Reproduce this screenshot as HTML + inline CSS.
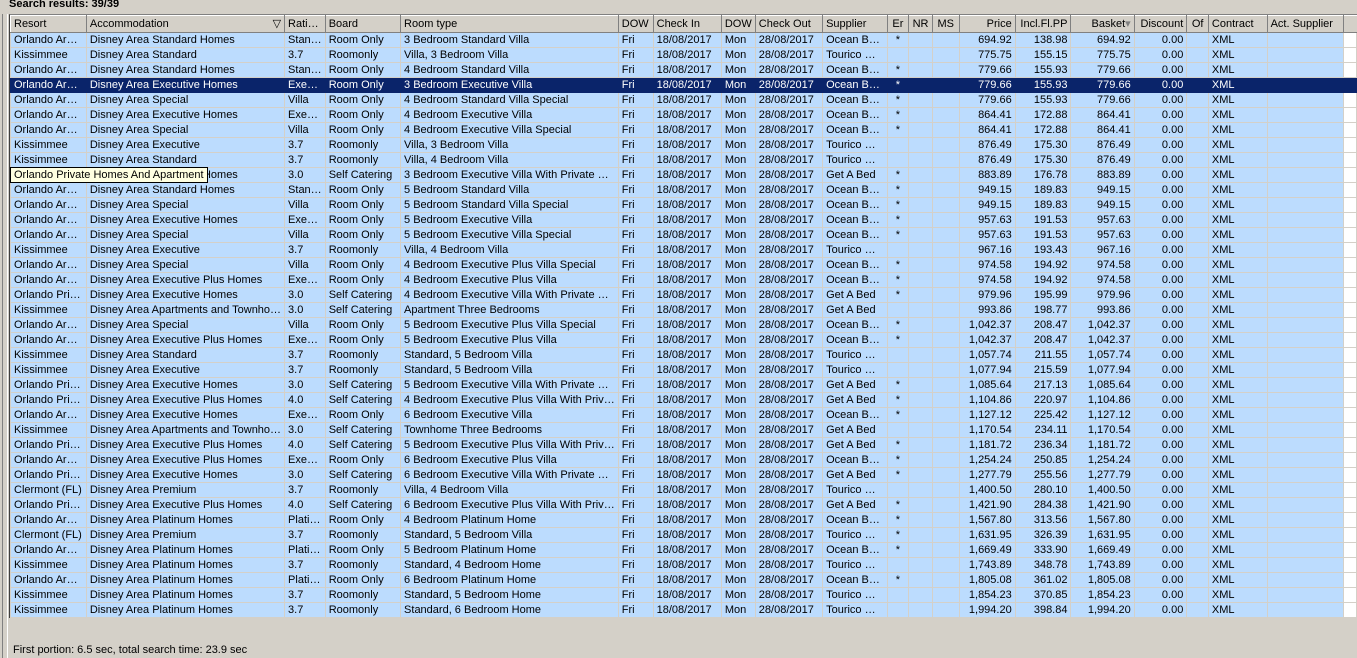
<!DOCTYPE html>
<html><head><meta charset="utf-8"><style>
*{margin:0;padding:0;box-sizing:border-box}
body{width:1357px;height:658px;background:#d4d0c8;font-family:"Liberation Sans",Tahoma,sans-serif;font-size:11px;color:#000;position:relative;overflow:hidden}
#title{position:absolute;left:9px;top:-2px;font-weight:bold;font-size:11px}
#frame{position:absolute;left:9px;top:14px;width:1348px;height:604px;background:#fff;border-left:1px solid #404040;border-top:1px solid #808080}
#lb1{position:absolute;left:2px;top:14px;width:1px;height:644px;background:#808080}
#lb2{position:absolute;left:7px;top:14px;width:1px;height:644px;background:#fff}
table{position:absolute;left:10px;top:15px;border-collapse:collapse;table-layout:fixed}
td,th{height:15px;padding:0 3px;white-space:nowrap;overflow:hidden;border:1px solid #d4d0c8;line-height:13px}
th{font-weight:normal;text-align:left;background:#d4d0c8;height:17px;border:1px solid #808080;border-left-color:#fff;border-top-color:#fff}
tbody tr{background:#bcdcfe}
tbody td.f{background:#fff}
tr.sel{background:#0a246a;color:#fff}
tr.sel td{border-color:#0a246a}
.r{text-align:right}.c{text-align:center}
#tip{position:absolute;left:10px;top:167px;height:16px;padding:0 3px;background:#ffffe1;border:1px solid #000;line-height:14px;white-space:nowrap}
#status{position:absolute;left:13px;top:644px}
</style></head><body>
<div id="title">Search results: 39/39</div>
<div id="lb1"></div><div id="lb2"></div>
<div id="frame"></div>
<table>
<colgroup><col style="width:76px"><col style="width:198px"><col style="width:40px"><col style="width:76px"><col style="width:209px"><col style="width:35px"><col style="width:69px"><col style="width:34px"><col style="width:68px"><col style="width:65px"><col style="width:22px"><col style="width:24px"><col style="width:27px"><col style="width:57px"><col style="width:56px"><col style="width:65px"><col style="width:53px"><col style="width:22px"><col style="width:60px"><col style="width:77px"><col style="width:14px"></colgroup>
<thead><tr><th>Resort</th><th>Accommodation<span style="float:right">&#9661;</span></th><th>Rati…</th><th>Board</th><th>Room type</th><th>DOW</th><th>Check In</th><th>DOW</th><th>Check Out</th><th>Supplier</th><th class="c">Er</th><th class="c">NR</th><th class="c">MS</th><th class="r">Price</th><th class="r">Incl.Fl.PP</th><th class="r">Basket<span style="color:#808080">&#9662;</span></th><th class="r">Discount</th><th class="c">Of</th><th>Contract</th><th>Act. Supplier</th><th style="border-right:none"></th></tr></thead>
<tbody>
<tr><td>Orlando Ar…</td><td>Disney Area Standard Homes</td><td>Stan…</td><td>Room Only</td><td>3 Bedroom Standard Villa</td><td>Fri</td><td>18/08/2017</td><td>Mon</td><td>28/08/2017</td><td>Ocean B…</td><td class="c">*</td><td></td><td></td><td class="r">694.92</td><td class="r">138.98</td><td class="r">694.92</td><td class="r">0.00</td><td></td><td>XML</td><td></td><td class="f"></td></tr>
<tr><td>Kissimmee</td><td>Disney Area Standard</td><td>3.7</td><td>Roomonly</td><td>Villa, 3 Bedroom Villa</td><td>Fri</td><td>18/08/2017</td><td>Mon</td><td>28/08/2017</td><td>Tourico …</td><td class="c"></td><td></td><td></td><td class="r">775.75</td><td class="r">155.15</td><td class="r">775.75</td><td class="r">0.00</td><td></td><td>XML</td><td></td><td class="f"></td></tr>
<tr><td>Orlando Ar…</td><td>Disney Area Standard Homes</td><td>Stan…</td><td>Room Only</td><td>4 Bedroom Standard Villa</td><td>Fri</td><td>18/08/2017</td><td>Mon</td><td>28/08/2017</td><td>Ocean B…</td><td class="c">*</td><td></td><td></td><td class="r">779.66</td><td class="r">155.93</td><td class="r">779.66</td><td class="r">0.00</td><td></td><td>XML</td><td></td><td class="f"></td></tr>
<tr class="sel"><td>Orlando Ar…</td><td>Disney Area Executive Homes</td><td>Exe…</td><td>Room Only</td><td>3 Bedroom Executive Villa</td><td>Fri</td><td>18/08/2017</td><td>Mon</td><td>28/08/2017</td><td>Ocean B…</td><td class="c">*</td><td></td><td></td><td class="r">779.66</td><td class="r">155.93</td><td class="r">779.66</td><td class="r">0.00</td><td></td><td>XML</td><td></td><td></td></tr>
<tr><td>Orlando Ar…</td><td>Disney Area Special</td><td>Villa</td><td>Room Only</td><td>4 Bedroom Standard Villa Special</td><td>Fri</td><td>18/08/2017</td><td>Mon</td><td>28/08/2017</td><td>Ocean B…</td><td class="c">*</td><td></td><td></td><td class="r">779.66</td><td class="r">155.93</td><td class="r">779.66</td><td class="r">0.00</td><td></td><td>XML</td><td></td><td class="f"></td></tr>
<tr><td>Orlando Ar…</td><td>Disney Area Executive Homes</td><td>Exe…</td><td>Room Only</td><td>4 Bedroom Executive Villa</td><td>Fri</td><td>18/08/2017</td><td>Mon</td><td>28/08/2017</td><td>Ocean B…</td><td class="c">*</td><td></td><td></td><td class="r">864.41</td><td class="r">172.88</td><td class="r">864.41</td><td class="r">0.00</td><td></td><td>XML</td><td></td><td class="f"></td></tr>
<tr><td>Orlando Ar…</td><td>Disney Area Special</td><td>Villa</td><td>Room Only</td><td>4 Bedroom Executive Villa Special</td><td>Fri</td><td>18/08/2017</td><td>Mon</td><td>28/08/2017</td><td>Ocean B…</td><td class="c">*</td><td></td><td></td><td class="r">864.41</td><td class="r">172.88</td><td class="r">864.41</td><td class="r">0.00</td><td></td><td>XML</td><td></td><td class="f"></td></tr>
<tr><td>Kissimmee</td><td>Disney Area Executive</td><td>3.7</td><td>Roomonly</td><td>Villa, 3 Bedroom Villa</td><td>Fri</td><td>18/08/2017</td><td>Mon</td><td>28/08/2017</td><td>Tourico …</td><td class="c"></td><td></td><td></td><td class="r">876.49</td><td class="r">175.30</td><td class="r">876.49</td><td class="r">0.00</td><td></td><td>XML</td><td></td><td class="f"></td></tr>
<tr><td>Kissimmee</td><td>Disney Area Standard</td><td>3.7</td><td>Roomonly</td><td>Villa, 4 Bedroom Villa</td><td>Fri</td><td>18/08/2017</td><td>Mon</td><td>28/08/2017</td><td>Tourico …</td><td class="c"></td><td></td><td></td><td class="r">876.49</td><td class="r">175.30</td><td class="r">876.49</td><td class="r">0.00</td><td></td><td>XML</td><td></td><td class="f"></td></tr>
<tr><td>Orlando Pri…</td><td>Disney Area Executive Homes</td><td>3.0</td><td>Self Catering</td><td>3 Bedroom Executive Villa With Private …</td><td>Fri</td><td>18/08/2017</td><td>Mon</td><td>28/08/2017</td><td>Get A Bed</td><td class="c">*</td><td></td><td></td><td class="r">883.89</td><td class="r">176.78</td><td class="r">883.89</td><td class="r">0.00</td><td></td><td>XML</td><td></td><td class="f"></td></tr>
<tr><td>Orlando Ar…</td><td>Disney Area Standard Homes</td><td>Stan…</td><td>Room Only</td><td>5 Bedroom Standard Villa</td><td>Fri</td><td>18/08/2017</td><td>Mon</td><td>28/08/2017</td><td>Ocean B…</td><td class="c">*</td><td></td><td></td><td class="r">949.15</td><td class="r">189.83</td><td class="r">949.15</td><td class="r">0.00</td><td></td><td>XML</td><td></td><td class="f"></td></tr>
<tr><td>Orlando Ar…</td><td>Disney Area Special</td><td>Villa</td><td>Room Only</td><td>5 Bedroom Standard Villa Special</td><td>Fri</td><td>18/08/2017</td><td>Mon</td><td>28/08/2017</td><td>Ocean B…</td><td class="c">*</td><td></td><td></td><td class="r">949.15</td><td class="r">189.83</td><td class="r">949.15</td><td class="r">0.00</td><td></td><td>XML</td><td></td><td class="f"></td></tr>
<tr><td>Orlando Ar…</td><td>Disney Area Executive Homes</td><td>Exe…</td><td>Room Only</td><td>5 Bedroom Executive Villa</td><td>Fri</td><td>18/08/2017</td><td>Mon</td><td>28/08/2017</td><td>Ocean B…</td><td class="c">*</td><td></td><td></td><td class="r">957.63</td><td class="r">191.53</td><td class="r">957.63</td><td class="r">0.00</td><td></td><td>XML</td><td></td><td class="f"></td></tr>
<tr><td>Orlando Ar…</td><td>Disney Area Special</td><td>Villa</td><td>Room Only</td><td>5 Bedroom Executive Villa Special</td><td>Fri</td><td>18/08/2017</td><td>Mon</td><td>28/08/2017</td><td>Ocean B…</td><td class="c">*</td><td></td><td></td><td class="r">957.63</td><td class="r">191.53</td><td class="r">957.63</td><td class="r">0.00</td><td></td><td>XML</td><td></td><td class="f"></td></tr>
<tr><td>Kissimmee</td><td>Disney Area Executive</td><td>3.7</td><td>Roomonly</td><td>Villa, 4 Bedroom Villa</td><td>Fri</td><td>18/08/2017</td><td>Mon</td><td>28/08/2017</td><td>Tourico …</td><td class="c"></td><td></td><td></td><td class="r">967.16</td><td class="r">193.43</td><td class="r">967.16</td><td class="r">0.00</td><td></td><td>XML</td><td></td><td class="f"></td></tr>
<tr><td>Orlando Ar…</td><td>Disney Area Special</td><td>Villa</td><td>Room Only</td><td>4 Bedroom Executive Plus Villa Special</td><td>Fri</td><td>18/08/2017</td><td>Mon</td><td>28/08/2017</td><td>Ocean B…</td><td class="c">*</td><td></td><td></td><td class="r">974.58</td><td class="r">194.92</td><td class="r">974.58</td><td class="r">0.00</td><td></td><td>XML</td><td></td><td class="f"></td></tr>
<tr><td>Orlando Ar…</td><td>Disney Area Executive Plus Homes</td><td>Exe…</td><td>Room Only</td><td>4 Bedroom Executive Plus Villa</td><td>Fri</td><td>18/08/2017</td><td>Mon</td><td>28/08/2017</td><td>Ocean B…</td><td class="c">*</td><td></td><td></td><td class="r">974.58</td><td class="r">194.92</td><td class="r">974.58</td><td class="r">0.00</td><td></td><td>XML</td><td></td><td class="f"></td></tr>
<tr><td>Orlando Pri…</td><td>Disney Area Executive Homes</td><td>3.0</td><td>Self Catering</td><td>4 Bedroom Executive Villa With Private …</td><td>Fri</td><td>18/08/2017</td><td>Mon</td><td>28/08/2017</td><td>Get A Bed</td><td class="c">*</td><td></td><td></td><td class="r">979.96</td><td class="r">195.99</td><td class="r">979.96</td><td class="r">0.00</td><td></td><td>XML</td><td></td><td class="f"></td></tr>
<tr><td>Kissimmee</td><td>Disney Area Apartments and Townho…</td><td>3.0</td><td>Self Catering</td><td>Apartment Three Bedrooms</td><td>Fri</td><td>18/08/2017</td><td>Mon</td><td>28/08/2017</td><td>Get A Bed</td><td class="c"></td><td></td><td></td><td class="r">993.86</td><td class="r">198.77</td><td class="r">993.86</td><td class="r">0.00</td><td></td><td>XML</td><td></td><td class="f"></td></tr>
<tr><td>Orlando Ar…</td><td>Disney Area Special</td><td>Villa</td><td>Room Only</td><td>5 Bedroom Executive Plus Villa Special</td><td>Fri</td><td>18/08/2017</td><td>Mon</td><td>28/08/2017</td><td>Ocean B…</td><td class="c">*</td><td></td><td></td><td class="r">1,042.37</td><td class="r">208.47</td><td class="r">1,042.37</td><td class="r">0.00</td><td></td><td>XML</td><td></td><td class="f"></td></tr>
<tr><td>Orlando Ar…</td><td>Disney Area Executive Plus Homes</td><td>Exe…</td><td>Room Only</td><td>5 Bedroom Executive Plus Villa</td><td>Fri</td><td>18/08/2017</td><td>Mon</td><td>28/08/2017</td><td>Ocean B…</td><td class="c">*</td><td></td><td></td><td class="r">1,042.37</td><td class="r">208.47</td><td class="r">1,042.37</td><td class="r">0.00</td><td></td><td>XML</td><td></td><td class="f"></td></tr>
<tr><td>Kissimmee</td><td>Disney Area Standard</td><td>3.7</td><td>Roomonly</td><td>Standard, 5 Bedroom Villa</td><td>Fri</td><td>18/08/2017</td><td>Mon</td><td>28/08/2017</td><td>Tourico …</td><td class="c"></td><td></td><td></td><td class="r">1,057.74</td><td class="r">211.55</td><td class="r">1,057.74</td><td class="r">0.00</td><td></td><td>XML</td><td></td><td class="f"></td></tr>
<tr><td>Kissimmee</td><td>Disney Area Executive</td><td>3.7</td><td>Roomonly</td><td>Standard, 5 Bedroom Villa</td><td>Fri</td><td>18/08/2017</td><td>Mon</td><td>28/08/2017</td><td>Tourico …</td><td class="c"></td><td></td><td></td><td class="r">1,077.94</td><td class="r">215.59</td><td class="r">1,077.94</td><td class="r">0.00</td><td></td><td>XML</td><td></td><td class="f"></td></tr>
<tr><td>Orlando Pri…</td><td>Disney Area Executive Homes</td><td>3.0</td><td>Self Catering</td><td>5 Bedroom Executive Villa With Private …</td><td>Fri</td><td>18/08/2017</td><td>Mon</td><td>28/08/2017</td><td>Get A Bed</td><td class="c">*</td><td></td><td></td><td class="r">1,085.64</td><td class="r">217.13</td><td class="r">1,085.64</td><td class="r">0.00</td><td></td><td>XML</td><td></td><td class="f"></td></tr>
<tr><td>Orlando Pri…</td><td>Disney Area Executive Plus Homes</td><td>4.0</td><td>Self Catering</td><td>4 Bedroom Executive Plus Villa With Priv…</td><td>Fri</td><td>18/08/2017</td><td>Mon</td><td>28/08/2017</td><td>Get A Bed</td><td class="c">*</td><td></td><td></td><td class="r">1,104.86</td><td class="r">220.97</td><td class="r">1,104.86</td><td class="r">0.00</td><td></td><td>XML</td><td></td><td class="f"></td></tr>
<tr><td>Orlando Ar…</td><td>Disney Area Executive Homes</td><td>Exe…</td><td>Room Only</td><td>6 Bedroom Executive Villa</td><td>Fri</td><td>18/08/2017</td><td>Mon</td><td>28/08/2017</td><td>Ocean B…</td><td class="c">*</td><td></td><td></td><td class="r">1,127.12</td><td class="r">225.42</td><td class="r">1,127.12</td><td class="r">0.00</td><td></td><td>XML</td><td></td><td class="f"></td></tr>
<tr><td>Kissimmee</td><td>Disney Area Apartments and Townho…</td><td>3.0</td><td>Self Catering</td><td>Townhome Three Bedrooms</td><td>Fri</td><td>18/08/2017</td><td>Mon</td><td>28/08/2017</td><td>Get A Bed</td><td class="c"></td><td></td><td></td><td class="r">1,170.54</td><td class="r">234.11</td><td class="r">1,170.54</td><td class="r">0.00</td><td></td><td>XML</td><td></td><td class="f"></td></tr>
<tr><td>Orlando Pri…</td><td>Disney Area Executive Plus Homes</td><td>4.0</td><td>Self Catering</td><td>5 Bedroom Executive Plus Villa With Priv…</td><td>Fri</td><td>18/08/2017</td><td>Mon</td><td>28/08/2017</td><td>Get A Bed</td><td class="c">*</td><td></td><td></td><td class="r">1,181.72</td><td class="r">236.34</td><td class="r">1,181.72</td><td class="r">0.00</td><td></td><td>XML</td><td></td><td class="f"></td></tr>
<tr><td>Orlando Ar…</td><td>Disney Area Executive Plus Homes</td><td>Exe…</td><td>Room Only</td><td>6 Bedroom Executive Plus Villa</td><td>Fri</td><td>18/08/2017</td><td>Mon</td><td>28/08/2017</td><td>Ocean B…</td><td class="c">*</td><td></td><td></td><td class="r">1,254.24</td><td class="r">250.85</td><td class="r">1,254.24</td><td class="r">0.00</td><td></td><td>XML</td><td></td><td class="f"></td></tr>
<tr><td>Orlando Pri…</td><td>Disney Area Executive Homes</td><td>3.0</td><td>Self Catering</td><td>6 Bedroom Executive Villa With Private …</td><td>Fri</td><td>18/08/2017</td><td>Mon</td><td>28/08/2017</td><td>Get A Bed</td><td class="c">*</td><td></td><td></td><td class="r">1,277.79</td><td class="r">255.56</td><td class="r">1,277.79</td><td class="r">0.00</td><td></td><td>XML</td><td></td><td class="f"></td></tr>
<tr><td>Clermont (FL)</td><td>Disney Area Premium</td><td>3.7</td><td>Roomonly</td><td>Villa, 4 Bedroom Villa</td><td>Fri</td><td>18/08/2017</td><td>Mon</td><td>28/08/2017</td><td>Tourico …</td><td class="c"></td><td></td><td></td><td class="r">1,400.50</td><td class="r">280.10</td><td class="r">1,400.50</td><td class="r">0.00</td><td></td><td>XML</td><td></td><td class="f"></td></tr>
<tr><td>Orlando Pri…</td><td>Disney Area Executive Plus Homes</td><td>4.0</td><td>Self Catering</td><td>6 Bedroom Executive Plus Villa With Priv…</td><td>Fri</td><td>18/08/2017</td><td>Mon</td><td>28/08/2017</td><td>Get A Bed</td><td class="c">*</td><td></td><td></td><td class="r">1,421.90</td><td class="r">284.38</td><td class="r">1,421.90</td><td class="r">0.00</td><td></td><td>XML</td><td></td><td class="f"></td></tr>
<tr><td>Orlando Ar…</td><td>Disney Area Platinum Homes</td><td>Plati…</td><td>Room Only</td><td>4 Bedroom Platinum Home</td><td>Fri</td><td>18/08/2017</td><td>Mon</td><td>28/08/2017</td><td>Ocean B…</td><td class="c">*</td><td></td><td></td><td class="r">1,567.80</td><td class="r">313.56</td><td class="r">1,567.80</td><td class="r">0.00</td><td></td><td>XML</td><td></td><td class="f"></td></tr>
<tr><td>Clermont (FL)</td><td>Disney Area Premium</td><td>3.7</td><td>Roomonly</td><td>Standard, 5 Bedroom Villa</td><td>Fri</td><td>18/08/2017</td><td>Mon</td><td>28/08/2017</td><td>Tourico …</td><td class="c">*</td><td></td><td></td><td class="r">1,631.95</td><td class="r">326.39</td><td class="r">1,631.95</td><td class="r">0.00</td><td></td><td>XML</td><td></td><td class="f"></td></tr>
<tr><td>Orlando Ar…</td><td>Disney Area Platinum Homes</td><td>Plati…</td><td>Room Only</td><td>5 Bedroom Platinum Home</td><td>Fri</td><td>18/08/2017</td><td>Mon</td><td>28/08/2017</td><td>Ocean B…</td><td class="c">*</td><td></td><td></td><td class="r">1,669.49</td><td class="r">333.90</td><td class="r">1,669.49</td><td class="r">0.00</td><td></td><td>XML</td><td></td><td class="f"></td></tr>
<tr><td>Kissimmee</td><td>Disney Area Platinum Homes</td><td>3.7</td><td>Roomonly</td><td>Standard, 4 Bedroom Home</td><td>Fri</td><td>18/08/2017</td><td>Mon</td><td>28/08/2017</td><td>Tourico …</td><td class="c"></td><td></td><td></td><td class="r">1,743.89</td><td class="r">348.78</td><td class="r">1,743.89</td><td class="r">0.00</td><td></td><td>XML</td><td></td><td class="f"></td></tr>
<tr><td>Orlando Ar…</td><td>Disney Area Platinum Homes</td><td>Plati…</td><td>Room Only</td><td>6 Bedroom Platinum Home</td><td>Fri</td><td>18/08/2017</td><td>Mon</td><td>28/08/2017</td><td>Ocean B…</td><td class="c">*</td><td></td><td></td><td class="r">1,805.08</td><td class="r">361.02</td><td class="r">1,805.08</td><td class="r">0.00</td><td></td><td>XML</td><td></td><td class="f"></td></tr>
<tr><td>Kissimmee</td><td>Disney Area Platinum Homes</td><td>3.7</td><td>Roomonly</td><td>Standard, 5 Bedroom Home</td><td>Fri</td><td>18/08/2017</td><td>Mon</td><td>28/08/2017</td><td>Tourico …</td><td class="c"></td><td></td><td></td><td class="r">1,854.23</td><td class="r">370.85</td><td class="r">1,854.23</td><td class="r">0.00</td><td></td><td>XML</td><td></td><td class="f"></td></tr>
<tr><td>Kissimmee</td><td>Disney Area Platinum Homes</td><td>3.7</td><td>Roomonly</td><td>Standard, 6 Bedroom Home</td><td>Fri</td><td>18/08/2017</td><td>Mon</td><td>28/08/2017</td><td>Tourico …</td><td class="c"></td><td></td><td></td><td class="r">1,994.20</td><td class="r">398.84</td><td class="r">1,994.20</td><td class="r">0.00</td><td></td><td>XML</td><td></td><td class="f"></td></tr>
</tbody></table>
<div id="tip">Orlando Private Homes And Apartment</div>
<div id="status">First portion: 6.5 sec, total search time: 23.9 sec</div>
</body></html>
